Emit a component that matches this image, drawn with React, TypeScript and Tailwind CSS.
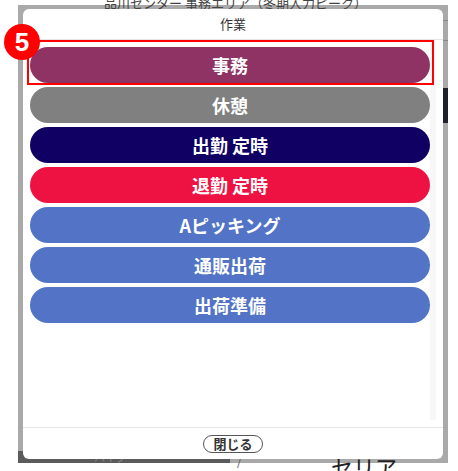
import React from 'react'

const items = [
  { label: '事務', color: 'bg-[#8f3264]' },
  { label: '休憩', color: 'bg-[#808080]' },
  { label: '出勤 定時', color: 'bg-[#100064]' },
  { label: '退勤 定時', color: 'bg-[#ee1243]' },
  { label: 'Aピッキング', color: 'bg-[#5273c6]' },
  { label: '通販出荷', color: 'bg-[#5273c6]' },
  { label: '出荷準備', color: 'bg-[#5273c6]' },
]

export default function App() {
  return (
    <div className="relative w-[458px] h-[471px] bg-white overflow-hidden font-['Noto_Sans_CJK_JP','Noto_Sans',sans-serif]">
      {/* page behind the dialog, already dimmed */}
      <div className="absolute left-[18px] top-[5px] w-[430px] h-[458px] bg-[#a9a9a9]">
        <div className="absolute left-[86px] top-[-12px] text-[13px] text-[#444] whitespace-nowrap">
          品川センター 事務エリア（冬期入力ピーク）
        </div>
        <div className="absolute right-0 top-[15px] w-[6px] h-px bg-[#8a8a8a]" />
        <div className="absolute right-0 top-[35px] w-[6px] h-px bg-[#8a8a8a]" />
        <div className="absolute right-0 top-[83px] w-[6px] h-[35px] bg-[#1f2329]" />
        <div className="absolute left-0 bottom-0 w-[212px] h-[12px] bg-[#5b5b5b]">
          <span className="absolute left-[76px] top-[1px] text-[11px] leading-none text-[#888]">ハイクー</span>
        </div>
        <span className="absolute left-[219px] bottom-[-4px] text-[12px] leading-none text-[#555]">/</span>
        <span className="absolute left-[313px] bottom-[-14px] text-[22px] leading-none text-[#222]">セリア</span>
      </div>

      {/* dialog */}
      <div className="absolute left-[23px] top-[9px] w-[420px] h-[450px] bg-white rounded-[6px] flex flex-col">
        <div className="h-[31px] flex items-center justify-center text-[13px] text-[#333] border-b border-[#e5e5e5]">
          作業
        </div>
        <div className="relative flex-1 flex px-[7px]">
          <div className="flex-1 flex flex-col gap-[4px] pt-[7px]">
            {items.map((it) => (
              <div
                key={it.label}
                className={`h-[36px] rounded-full ${it.color} flex items-center justify-center text-white font-bold text-[18px] leading-none`}
              >
                {it.label}
              </div>
            ))}
          </div>
          <div className="w-[6px] h-[380px] bg-[#f7f7f7]" />
          <div className="absolute left-[4px] top-0 w-[407px] h-[45px] border-2 border-[#ff0000]" />
        </div>
        <div className="h-[32px] border-t border-[#e5e5e5] flex items-center justify-center">
          <button className="h-[18px] px-[9px] rounded-full border border-[#555] text-[13px] font-bold leading-none text-[#333] flex items-center">
            閉じる
          </button>
        </div>
      </div>

      {/* step badge */}
      <div className="absolute left-[4px] top-[24px] w-[36px] h-[36px] rounded-full bg-[#ff0000] flex items-center justify-center text-white font-bold text-[26px] leading-none font-['Liberation_Sans',sans-serif]">
        5
      </div>
    </div>
  )
}
